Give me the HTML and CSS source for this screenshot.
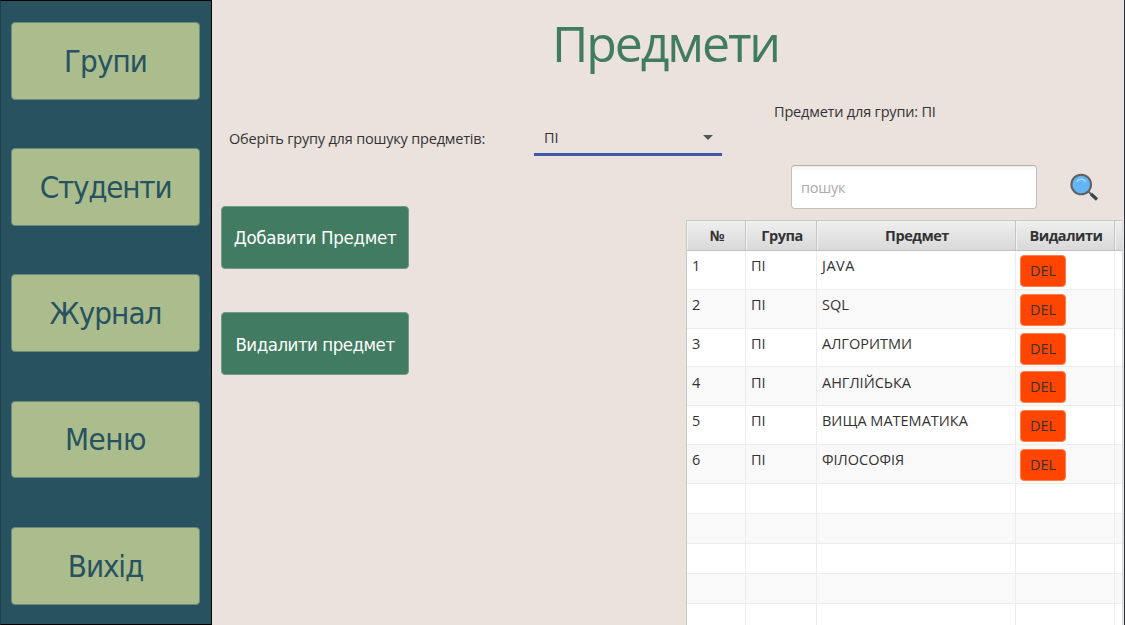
FILE: index.html
```html
<!DOCTYPE html>
<html lang="uk">
<head>
<meta charset="utf-8">
<title>Предмети</title>
<link rel="stylesheet" href="styles.css">
</head>
<body>
<nav class="sidebar">
  <button class="nav-btn"><span class="w-groups">Групи</span></button>
  <button class="nav-btn"><span class="w-students">Студенти</span></button>
  <button class="nav-btn"><span class="w-journal">Журнал</span></button>
  <button class="nav-btn"><span class="w-menu">Меню</span></button>
  <button class="nav-btn"><span class="w-exit">Вихід</span></button>
</nav>
<main class="main">
  <h1 class="title"><span>Предмети</span></h1>
  <div class="filter">
    <span class="filter-label">Оберіть групу для пошуку предметів:</span>
    <div class="combo"><span>ПІ</span><i class="arrow"></i></div>
    <span class="group-label">Предмети для групи: ПІ</span>
  </div>
  <div class="content">
    <div class="actions">
      <button class="action action-add"><span>Добавити Предмет</span></button>
      <button class="action action-del"><span>Видалити предмет</span></button>
    </div>
    <section class="subjects">
      <div class="search">
        <input class="search-input" placeholder="пошук">
        <svg class="search-icon" viewBox="0 0 30 30" width="30" height="30">
          <path d="M18.5 18.5 22 22" stroke="#616161" stroke-width="2"/>
          <path d="M21 21 27 26.5" stroke="#37474f" stroke-width="3.2"/>
          <circle cx="11.2" cy="11.5" r="9.8" fill="#64b5f6" stroke="#616161" stroke-width="2"/>
          <path d="M6.8 8.7C9 5.3 13.4 5.3 15.6 8.7" fill="none" stroke="#bbdefb" stroke-width="1.3"/>
        </svg>
      </div>
      <div class="table">
        <div class="head"><b>№</b><b>Група</b><b>Предмет</b><b>Видалити</b><b></b></div>
        <div class="row"><span>1</span><span>ПІ</span><span class="latin">JAVA</span><span><button class="del">DEL</button></span><span></span></div>
        <div class="row"><span>2</span><span>ПІ</span><span>SQL</span><span><button class="del">DEL</button></span><span></span></div>
        <div class="row"><span>3</span><span>ПІ</span><span>АЛГОРИТМИ</span><span><button class="del">DEL</button></span><span></span></div>
        <div class="row"><span>4</span><span>ПІ</span><span>АНГЛІЙСЬКА</span><span><button class="del">DEL</button></span><span></span></div>
        <div class="row"><span>5</span><span>ПІ</span><span>ВИЩА МАТЕМАТИКА</span><span><button class="del">DEL</button></span><span></span></div>
        <div class="row"><span>6</span><span>ПІ</span><span>ФІЛОСОФІЯ</span><span><button class="del">DEL</button></span><span></span></div>
        <div class="row empty"><span></span><span></span><span></span><span></span><span></span></div>
        <div class="row empty"><span></span><span></span><span></span><span></span><span></span></div>
        <div class="row empty"><span></span><span></span><span></span><span></span><span></span></div>
        <div class="row empty"><span></span><span></span><span></span><span></span><span></span></div>
        <div class="row empty"><span></span><span></span><span></span><span></span><span></span></div>
      </div>
    </section>
  </div>
</main>
</body>
</html>
```
FILE: styles.css
```css
* { box-sizing: border-box; }
body {
  margin: 0;
  width: 1125px;
  height: 625px;
  display: flex;
  overflow: hidden;
  background: #ebe2de;
  color: #333;
  font: 14.5px "Open Sans", "Noto Sans", sans-serif;
}
button { border: 0; padding: 0; font: inherit; color: inherit; white-space: nowrap; }
.sidebar {
  width: 212px;
  height: 625px;
  flex: none;
  padding: 21px 11px 0 10px;
  display: flex;
  flex-direction: column;
  gap: 48.4px;
  background: #285260;
  border: 1px solid #000;
  border-left-color: #1f3f4b;
}
.nav-btn {
  height: 77.8px;
  flex: none;
  background: #abbd8d;
  border: 1px solid #6c8a78;
  border-radius: 4px;
  color: #285260;
  font: 31px "DejaVu Sans Condensed", "DejaVu Sans", sans-serif;
  font-stretch: condensed;
}
.w-groups { letter-spacing: -0.9px; }
.w-students { letter-spacing: -1.2px; }
.w-journal { letter-spacing: -0.9px; }
.w-menu { letter-spacing: -0.5px; }
.w-exit { letter-spacing: -1.1px; }
.main {
  flex: 1;
  height: 625px;
  display: flex;
  flex-direction: column;
  border-right: 1px solid #27323c;
}
.title {
  margin: 0;
  height: 95px;
  padding-right: 5px;
  line-height: 86px;
  text-align: center;
  color: #417b61;
  font-size: 50px;
  font-weight: 400;
  letter-spacing: -2.1px;
}
.filter {
  height: 62px;
  flex: none;
  display: flex;
  align-items: flex-start;
  padding-left: 17px;
  white-space: nowrap;
  line-height: 20px;
}
.filter-label { width: 305px; padding-top: 34px; letter-spacing: -0.19px; }
.combo {
  width: 188px;
  height: 61px;
  display: flex;
  justify-content: space-between;
  padding: 33px 9px 0 10px;
  border-bottom: 3px solid #4059a9;
}
.arrow {
  width: 10px;
  height: 5px;
  margin-top: 7px;
  background: #555;
  clip-path: polygon(0 0, 100% 0, 50% 100%);
}
.group-label { margin-left: 52px; padding-top: 7px; letter-spacing: -0.18px; }
.content { display: flex; flex: 1; min-height: 0; }
.actions {
  width: 474px;
  flex: none;
  padding: 49px 0 0 9px;
  display: flex;
  flex-direction: column;
  gap: 43px;
}
.action {
  width: 188px;
  height: 63px;
  background: #417b61;
  border: 1px solid #6f9b87;
  border-radius: 4px;
  color: #fff;
  font: 18.5px "DejaVu Sans Condensed", "DejaVu Sans", sans-serif;
  font-stretch: condensed;
}
.action-add { letter-spacing: -0.3px; }
.action-del { letter-spacing: -0.48px; padding-top: 2px; }
.subjects { width: 438px; flex: none; overflow: hidden; }
.search { height: 63px; padding: 8px 0 0 105px; display: flex; gap: 33px; }
.search-input {
  width: 246px;
  height: 44px;
  padding: 0 9px;
  background: linear-gradient(#f1f1f1, #fff 5px);
  border: 1px solid #c6c1be;
  border-top-color: #b5b0ae;
  border-radius: 4px;
  font: inherit;
  letter-spacing: -0.2px;
}
.search-input::placeholder { color: #aaa; }
.search-icon { margin-top: 8px; }
.table { width: 437px; background: #fff; border: 1px solid #c8c8c8; border-bottom: 0; border-right-color: #ddd; }
.head, .row { display: grid; grid-template-columns: 59px 71px 199px 99px 1fr; }
.head {
  height: 30px;
  border-bottom: 1px solid #c2c2c2;
  background: linear-gradient(#efefef, #d9d9d9);
  line-height: 29px;
  text-align: center;
  letter-spacing: -0.45px;
}
.head b { padding-left: 2px; border-right: 1px solid #c4c4c4; box-shadow: inset 1px 1px 0 #f3f3f3; }
.head b:last-child { border-right: 0; }
.row { height: 38.8px; border-bottom: 1px solid #ededed; line-height: 20px; }
.row:nth-child(odd) { background: #f9f9f9; }
.row span { border-right: 1px solid #ededed; padding: 5.2px 0 0 5px; white-space: nowrap; }
.row .latin { letter-spacing: 0.5px; }
.row span:nth-child(4) { padding: 4px 0 0 4px; }
.row span:last-child { border-right: 0; }
.row.empty { height: 30px; }
.del {
  display: block;
  width: 46px;
  height: 32px;
  background: #ff4500;
  border: 1px solid #ff7e50;
  border-radius: 4px;
}
```
